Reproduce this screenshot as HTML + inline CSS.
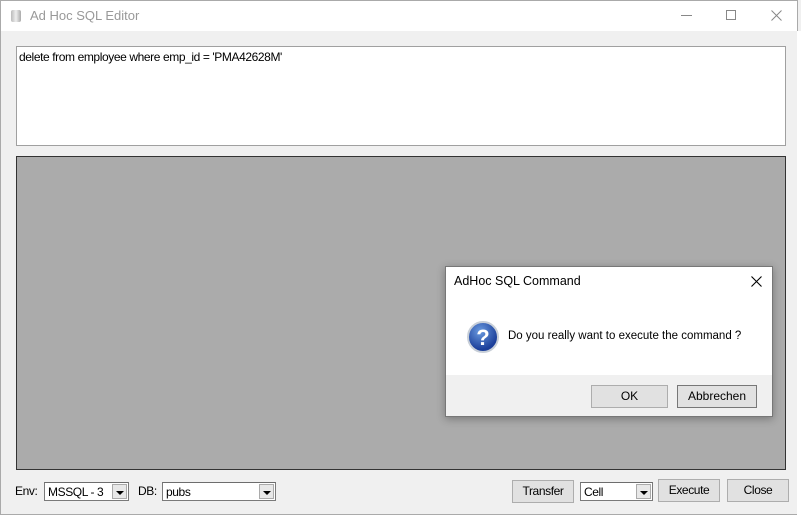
<html><head><style>
body{margin:0;width:801px;height:515px;background:#f0f0f0;position:relative;overflow:hidden;font-family:"Liberation Sans",sans-serif}
.a{position:absolute;box-sizing:border-box}
.btn{border:1px solid #adadad;background:#e1e1e1;font-size:12px;text-align:center;color:#000}
.sel{border:1px solid #7a7a7a;border-top-color:#6d6d6d;background:#fff;font-size:12px;padding:2px 0 0 3px;letter-spacing:-0.4px}
.dd{position:absolute;right:1px;top:1px;bottom:1px;width:15px;background:#e8e8e8;border:1px solid #aaa;box-sizing:border-box}
.dd:after{content:"";position:absolute;left:3px;top:6px;border:4px solid transparent;border-top:4px solid #000;border-bottom:0}
.lbl{font-size:12px;letter-spacing:-0.4px}
</style></head><body>
<div class="a" style="left:0;top:0;width:798px;height:515px;border:1px solid #aaa;border-top:none"></div>
<div class="a" style="left:0;top:0;width:798px;height:31px;background:#fff;border-top:1px solid #aaa;border-left:1px solid #aaa;border-right:1px solid #aaa"></div>
<div class="a" style="left:11px;top:10px;width:10px;height:12px;background:linear-gradient(90deg,#bbb,#eee,#aaa);border-radius:2px"></div>
<div class="a" style="left:30px;top:8px;font-size:13px;color:#999">Ad Hoc SQL Editor</div>
<div class="a" style="left:681px;top:15px;width:11px;height:1px;background:#888"></div>
<div class="a" style="left:726px;top:10px;width:10px;height:10px;border:1px solid #888"></div>
<svg class="a" style="left:771px;top:10px" width="11" height="11"><path d="M0.5 0.5L10.5 10.5M10.5 0.5L0.5 10.5" stroke="#888" stroke-width="1"/></svg>
<div class="a" style="left:16px;top:46px;width:770px;height:100px;background:#fff;border:1px solid #a0a0a0;font-size:12px;padding:3px 2px;letter-spacing:-0.4px">delete from employee where emp_id = 'PMA42628M'</div>
<div class="a" style="left:16px;top:156px;width:770px;height:314px;background:#ababab;border:1px solid #333"></div>
<div class="a" style="left:797px;top:31px;width:4px;height:484px;background:#fff"></div>
<div class="a" style="left:445px;top:266px;width:328px;height:151px;background:#fff;border:1px solid #777;box-shadow:0 2px 8px rgba(0,0,0,.3)"></div>
<div class="a" style="left:446px;top:375px;width:326px;height:41px;background:#f0f0f0"></div>
<div class="a" style="left:454px;top:274px;font-size:12.5px">AdHoc SQL Command</div>
<svg class="a" style="left:751px;top:276px" width="11" height="11"><path d="M0.5 0.5L10.5 10.5M10.5 0.5L0.5 10.5" stroke="#000" stroke-width="1.1"/></svg>
<div class="a" style="left:467px;top:321px;width:32px;height:32px;border-radius:50%;background:radial-gradient(circle at 40% 30%,#6a9be0,#1c3f9a 70%);border:2px solid #c8cfd8;color:#fff;font-weight:bold;font-size:22px;text-align:center;line-height:29px">?</div>
<div class="a" style="left:508px;top:330px;font-size:11.5px;letter-spacing:0">Do you really want to execute the command ?</div>
<div class="a btn" style="left:591px;top:385px;width:77px;height:23px;line-height:21px">OK</div>
<div class="a btn" style="left:677px;top:385px;width:80px;height:23px;line-height:21px;border-color:#777">Abbrechen</div>
<div class="a lbl" style="left:15px;top:484px">Env:</div>
<div class="a sel" style="left:44px;top:482px;width:85px;height:19px">MSSQL - 3<div class="dd"></div></div>
<div class="a lbl" style="left:138px;top:484px">DB:</div>
<div class="a sel" style="left:162px;top:482px;width:114px;height:19px">pubs<div class="dd"></div></div>
<div class="a btn" style="left:512px;top:480px;width:62px;height:23px;line-height:21px;letter-spacing:-0.4px">Transfer</div>
<div class="a sel" style="left:580px;top:482px;width:73px;height:19px">Cell<div class="dd"></div></div>
<div class="a btn" style="left:658px;top:479px;width:62px;height:23px;line-height:21px;letter-spacing:-0.4px">Execute</div>
<div class="a btn" style="left:727px;top:479px;width:62px;height:23px;line-height:21px;letter-spacing:-0.4px">Close</div>
</body></html>
